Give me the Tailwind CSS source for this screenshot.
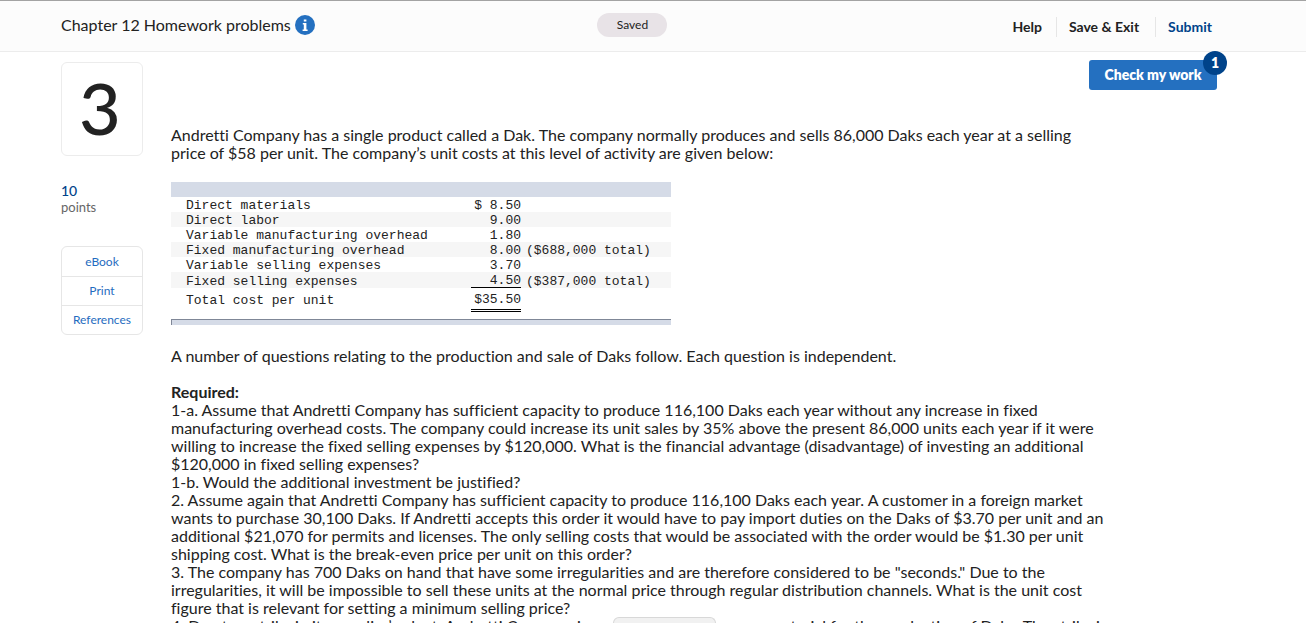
<!DOCTYPE html>
<html lang="en">

<head>
    <meta charset="UTF-8">
    <meta name="viewport" content="width=device-width, initial-scale=1.0">
    <title>Chapter 12 Homework problems</title>
    <script src="https://cdn.jsdelivr.net/npm/@tailwindcss/browser@4"></script>
</head>

<body class="h-screen overflow-hidden bg-white font-[Lato,sans-serif] [font-variant-ligatures:none] text-[#222]">
    <!-- top bar -->
    <header class="grid grid-cols-3 items-center h-[52px] pl-[61px] pr-20 border-t border-t-[#a3a3a3] border-b border-b-[#ececec] bg-[#fcfcfc]">
        <div class="flex items-center gap-1 pb-0.5">
            <h1 class="text-base whitespace-nowrap">Chapter 12 Homework problems</h1>
            <button aria-label="Assignment info">
                <svg class="w-5 h-5" viewBox="0 0 20 20">
                    <circle cx="10" cy="10" r="10" fill="#2470c0" />
                    <path d="M8.8 4.4h2.6v2.2H8.8zM7.8 8h3.6v6.6h1.2V16H7.6v-1.4h1.2V9.4h-1z" fill="#fff" />
                </svg>
            </button>
        </div>
        <div class="flex justify-center pr-[22px] pb-0.5">
            <span class="w-[70px] rounded-full bg-[#e8e3e7] text-center text-xs leading-6">Saved</span>
        </div>
        <nav class="flex justify-end pt-0.5 text-sm leading-5 font-bold whitespace-nowrap">
            <a href="#" class="pl-3 pr-[14px] border-r border-[#e6e6e6]">Help</a>
            <a href="#" class="pl-3 pr-4 border-r border-[#e6e6e6]">Save &amp; Exit</a>
            <a href="#" class="pl-3 pr-[14px] text-[#00438a]">Submit</a>
        </nav>
    </header>

    <div class="flex gap-7 pl-[61px] pr-[89px]">
        <!-- question number and tools -->
        <aside class="w-[82px] shrink-0 pt-[10px]">
            <div class="h-[94px] pr-1 border border-[#ececec] rounded-md text-center text-[72px] leading-[88px] font-medium">3</div>
            <div class="pt-[26px] text-sm leading-[18px] font-medium text-[#00438a]">10</div>
            <div class="text-[13px] leading-[15px] text-[#666]">points</div>
            <div class="mt-[31px] pt-px border border-[#e6e6e6] rounded-md divide-y divide-[#e6e6e6] text-center text-xs leading-[28px] text-[#1f6cc0]">
                <a href="#" class="block">eBook</a>
                <a href="#" class="block">Print</a>
                <a href="#" class="block">References</a>
            </div>
        </aside>

        <main class="grow">
            <div class="flex justify-end pt-2">
                <button class="relative h-[30px] w-32 rounded-[3px] bg-[#2470c0] text-sm font-extrabold text-white">
                    Check my work
                    <span class="absolute -top-[9px] -right-[10px] w-6 h-6 rounded-full bg-[#00438a] leading-6">1</span>
                </button>
            </div>

            <div class="pt-9 text-base leading-[18px] whitespace-nowrap">
                <p>Andretti Company has a single product called a Dak. The company normally produces and sells 86,000 Daks each year at a selling<br>
                    price of $58 per unit. The company’s unit costs at this level of activity are given below:</p>

                <table class="w-[500px] mt-5 border-collapse font-['Liberation_Mono',monospace] text-[13px] leading-[13px] [&_td]:pt-0.5">
                    <thead>
                        <tr class="h-[15px] bg-[#d5dbe7]">
                            <td class="w-[300px]"></td>
                            <td class="w-[50px]"></td>
                            <td></td>
                        </tr>
                    </thead>
                    <tbody>
                        <tr>
                            <td class="pl-[15px]">Direct materials</td>
                            <td class="text-right">$ 8.50</td>
                            <td></td>
                        </tr>
                        <tr class="bg-[#f6f6f6]">
                            <td class="pl-[15px]">Direct labor</td>
                            <td class="text-right">9.00</td>
                            <td></td>
                        </tr>
                        <tr>
                            <td class="pl-[15px]">Variable manufacturing overhead</td>
                            <td class="text-right">1.80</td>
                            <td></td>
                        </tr>
                        <tr class="bg-[#f6f6f6]">
                            <td class="pl-[15px]">Fixed manufacturing overhead</td>
                            <td class="text-right">8.00</td>
                            <td class="pl-[5px]">($688,000 total)</td>
                        </tr>
                        <tr>
                            <td class="pl-[15px]">Variable selling expenses</td>
                            <td class="text-right">3.70</td>
                            <td></td>
                        </tr>
                        <tr class="bg-[#f6f6f6]">
                            <td class="pl-[15px] align-bottom">Fixed selling expenses</td>
                            <td class="border-b border-black text-right">4.50</td>
                            <td class="pl-[5px] align-bottom">($387,000 total)</td>
                        </tr>
                        <tr>
                            <td class="pl-[15px]">Total cost per unit</td>
                            <td class="h-[23px] border-b-3 border-double border-black text-right">$35.50</td>
                            <td></td>
                        </tr>
                    </tbody>
                </table>
                <div class="w-[500px] h-[6px] mt-[7px] border-t border-l border-[#7f8797] bg-[#d5dbe7]"></div>

                <p class="mt-[22px]">A number of questions relating to the production and sale of Daks follow. Each question is independent.</p>

                <p class="mt-[18px] font-bold">Required:</p>
                <p>1-a. Assume that Andretti Company has sufficient capacity to produce 116,100 Daks each year without any increase in fixed<br>
                    manufacturing overhead costs. The company could increase its unit sales by 35% above the present 86,000 units each year if it were<br>
                    willing to increase the fixed selling expenses by $120,000. What is the financial advantage (disadvantage) of investing an additional<br>
                    $120,000 in fixed selling expenses?</p>
                <p>1-b. Would the additional investment be justified?</p>
                <p>2. Assume again that Andretti Company has sufficient capacity to produce 116,100 Daks each year. A customer in a foreign market<br>
                    wants to purchase 30,100 Daks. If Andretti accepts this order it would have to pay import duties on the Daks of $3.70 per unit and an<br>
                    additional $21,070 for permits and licenses. The only selling costs that would be associated with the order would be $1.30 per unit<br>
                    shipping cost. What is the break-even price per unit on this order?</p>
                <p>3. The company has 700 Daks on hand that have some irregularities and are therefore considered to be "seconds." Due to the<br>
                    irregularities, it will be impossible to sell these units at the normal price through regular distribution channels. What is the unit cost<br>
                    figure that is relevant for setting a minimum selling price?</p>
                <p>4. Due to a strike in its supplier’s plant, Andretti Company is unable to purchase more material for the production of Daks. The strike is</p>
            </div>
        </main>
    </div>

    <!-- bottom drawer handle -->
    <div class="fixed bottom-0 left-0 right-0 flex justify-center pl-[22px]">
        <div class="w-[103px] h-[6px] rounded-t-md border border-b-0 border-[#d8d8d8] bg-[#f1f1f1]"></div>
    </div>
</body>

</html>
